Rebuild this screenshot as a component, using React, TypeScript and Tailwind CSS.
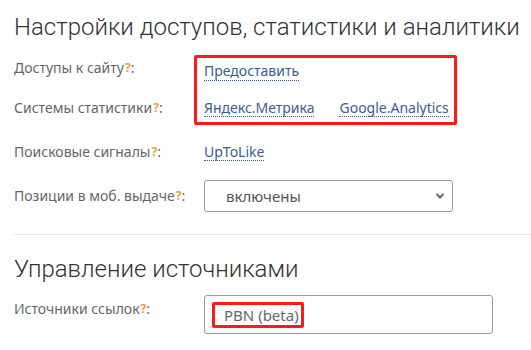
import React from "react";

const Q = () => (
  <sup className="text-[12px] font-bold text-[#f0a030] relative -top-[1px] ml-[1px]">?</sup>
);

const Label = ({ children }: { children: React.ReactNode }) => (
  <div className="w-[190px] shrink-0 text-[14px] leading-[20px] text-[#666]">
    {children}
    <Q />:
  </div>
);

const Link = ({ children }: { children: React.ReactNode }) => (
  <a className="text-[14px] text-[#3b5d96] border-b border-dotted border-[#3b5d96] leading-[16px] cursor-pointer">
    {children}
  </a>
);

export default function App() {
  return (
    <div
      className="w-[531px] h-[350px] overflow-hidden bg-white pl-[14px]"
      style={{ fontFamily: '"Noto Sans", sans-serif' }}
    >
      <h1
        className="pt-[12px] text-[24px] font-light text-[#333] leading-[30px] whitespace-nowrap"
        style={{ fontFamily: "Roboto, sans-serif" }}
      >
        Настройки доступов, статистики и аналитики
      </h1>
      <div className="flex mt-[13px]">
        <div className="flex flex-col w-[180px] shrink-0">
          <div className="h-[43px] pt-[3px]">
            <Label>Доступы к сайту</Label>
          </div>
          <div>
            <Label>Системы статистики</Label>
          </div>
        </div>
        <div className="w-[263px] h-[70px] border-[3px] border-[#ff1a1a] rounded-[2px] pl-[7px] flex flex-col">
          <div className="h-[42px]">
            <Link>Предоставить</Link>
          </div>
          <div className="flex gap-[25px]">
            <Link>Яндекс.Метрика</Link>
            <Link>Google.Analytics</Link>
          </div>
        </div>
      </div>
      <div className="flex items-center mt-[17px] h-[20px]">
        <Label>Поисковые сигналы</Label>
        <Link>UpToLike</Link>
      </div>
      <div className="flex items-center mt-[18px]">
        <Label>Позиции в моб. выдаче</Label>
        <div className="w-[249px] h-[32px] border border-[#999] rounded-[3px] flex items-center justify-between pl-[21px] pr-[7px]">
          <span className="text-[15px] text-[#555]">включены</span>
          <svg width="10" height="8" viewBox="0 0 10 8">
            <path d="M1.5 2 L5 5.5 L8.5 2" stroke="#666" strokeWidth="2" fill="none" />
          </svg>
        </div>
      </div>
      <div className="mt-[22px] h-px bg-[#e6e6e6]" />
      <h2
        className="mt-[19px] text-[24px] font-light text-[#333] leading-[30px]"
        style={{ fontFamily: "Roboto, sans-serif" }}
      >
        Управление источниками
      </h2>
      <div className="flex mt-[11px]">
        <div className="pt-[4px]">
          <Label>Источники ссылок</Label>
        </div>
        <div className="w-[289px] h-[39px] border border-[#999] rounded-[3px] pl-[7px] pt-[6px]">
          <div className="w-[92px] h-[26px] border-[3px] border-[#ff1a1a] rounded-[2px] pl-[9px] text-[15px] text-[#666] leading-[20px]">
            PBN (beta)
          </div>
        </div>
      </div>
    </div>
  );
}
